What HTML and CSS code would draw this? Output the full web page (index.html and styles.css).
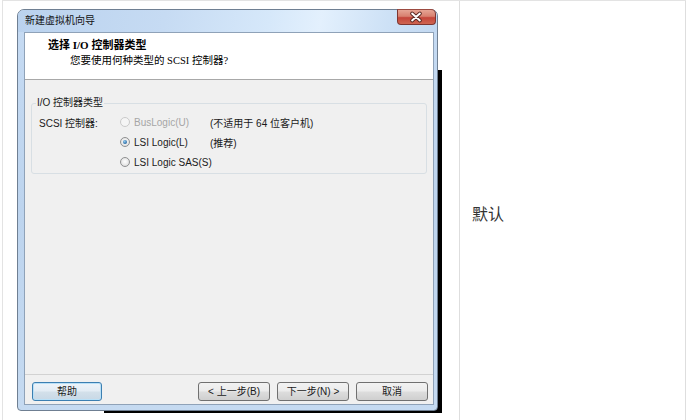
FILE: index.html
```html
<!DOCTYPE html>
<html lang="zh-CN">
<head>
<meta charset="utf-8">
<title>新建虚拟机向导</title>
<link rel="stylesheet" href="styles.css">
</head>
<body>
<div class="tbl">
  <div class="cell cell-img">
    <div class="win">
      <div class="titlebar">
        <span class="title">新建虚拟机向导</span>
        <span class="close">
          <svg width="39" height="16" viewBox="0 0 39 16">
            <path d="M15.5 4.5 L23.5 11.5 M23.5 4.5 L15.5 11.5" stroke="#5a2a24" stroke-width="4" stroke-linecap="round"/>
            <path d="M15.5 4.5 L23.5 11.5 M23.5 4.5 L15.5 11.5" stroke="#ffffff" stroke-width="2" stroke-linecap="round"/>
          </svg>
        </span>
      </div>
      <div class="client">
        <div class="header">
          <div class="h-title">选择 I/O 控制器类型</div>
          <div class="h-sub">您要使用何种类型的 SCSI 控制器?</div>
        </div>
        <div class="main">
          <fieldset class="group">
            <legend>I/O 控制器类型</legend>
            <div class="row">
              <span class="lbl">SCSI 控制器:</span>
              <span class="opt disabled"><span class="radio"></span>BusLogic(U)</span>
              <span class="desc">(不适用于 64 位客户机)</span>
            </div>
            <div class="row">
              <span class="lbl"></span>
              <span class="opt"><span class="radio on"></span>LSI Logic(L)</span>
              <span class="desc">(推荐)</span>
            </div>
            <div class="row">
              <span class="lbl"></span>
              <span class="opt wide"><span class="radio"></span>LSI Logic SAS(S)</span>
            </div>
          </fieldset>
        </div>
        <div class="footer">
          <button class="btn default">帮助</button>
          <span class="spacer"></span>
          <button class="btn">&lt; 上一步(B)</button>
          <button class="btn">下一步(N) &gt;</button>
          <button class="btn">取消</button>
        </div>
      </div>
    </div>
  </div>
  <div class="cell cell-text">默认</div>
</div>
</body>
</html>
```

FILE: styles.css
```css
body {
  margin: 0;
  background: #ffffff;
  font-family: "Liberation Sans", "Noto Sans CJK SC", sans-serif;
  color: #000;
}

.tbl {
  display: flex;
  margin-left: 2px;
  width: 684px;
  box-sizing: border-box;
  border-top: 1px solid #e3e3e3;
  border-left: 1px solid #e3e3e3;
}

.cell-img {
  width: 457px;
  box-sizing: border-box;
  border-right: 1px solid #dedede;
  padding: 8px 0 13px 14px;
}

.cell-text {
  flex: 1;
  border-right: 1px solid #dedede;
  display: flex;
  align-items: center;
  padding-left: 12px;
  font-size: 16px;
  color: #333;
}

/* dialog window */
.win {
  position: relative;
  width: 421px;
  height: 402px;
  box-sizing: border-box;
  border: 1px solid #6f7f92;
  border-radius: 7px 7px 4px 4px;
  background: linear-gradient(#c6dbf3, #bdd4ee 50%, #c5daf1);
  display: flex;
  flex-direction: column;
}

.win::before {
  content: "";
  position: absolute;
  right: -5px;
  top: 60px;
  width: 5px;
  bottom: -3px;
  background: #000;
  z-index: -1;
}

.win::after {
  content: "";
  position: absolute;
  left: 86px;
  right: -5px;
  bottom: -3px;
  height: 6px;
  background: #000;
  z-index: -1;
}

.titlebar {
  height: 22px;
  flex: none;
  display: flex;
  align-items: center;
  padding-left: 7px;
  font-size: 10px;
  border-radius: 6px 6px 0 0;
  background: linear-gradient(100deg, #bad2ee 0%, #c6dbf3 35%, #d6e8fa 60%, #e3f0fd 72%, #cde1f6 88%, #c2d8f1 100%);
}

.title {
  line-height: 14px;
  color: #111;
}

.close {
  position: absolute;
  top: -1px;
  right: 1px;
  width: 39px;
  height: 16px;
  box-sizing: border-box;
  border: 1px solid #7e3530;
  border-top-color: #9c4a40;
  border-radius: 0 5px 4px 4px;
  background: linear-gradient(#e6a595 0%, #d8806f 45%, #c4453a 55%, #cf6551 100%);
  display: flex;
  overflow: hidden;
}

.close svg {
  display: block;
  margin: -1px 0 0 -1px;
}

.client {
  width: 410px;
  height: 373px;
  margin: 0 0 5px 6px;
  box-sizing: border-box;
  border: 1px solid #8fa2b8;
  background: #f0f0f0;
  display: flex;
  flex-direction: column;
}

.header {
  height: 46px;
  flex: none;
  background: #fff;
  border-bottom: 1px solid #a8a8a8;
  padding-top: 5px;
  box-sizing: content-box;
  height: 41px;
}

.h-title {
  font-family: "Liberation Serif", "Noto Sans CJK SC", serif;
  font-weight: bold;
  font-size: 11px;
  line-height: 14px;
  padding-left: 23px;
}

.h-sub {
  font-family: "Liberation Serif", "Noto Sans CJK SC", serif;
  font-size: 10.5px;
  line-height: 14px;
  margin-top: 2px;
  padding-left: 45px;
}

.main {
  height: 294px;
  flex: none;
  box-sizing: border-box;
  padding-top: 16px;
}

.group {
  margin: 0 6px;
  padding: 2px 0 1px 4px;
  border: 1px solid #d8dfe4;
  border-radius: 3px;
  font-size: 10px;
}

.group legend {
  padding: 0 1px;
  line-height: 14px;
  font-size: 10px;
  color: #1a1a1a;
}

.row {
  display: flex;
  align-items: center;
  height: 20px;
  font-size: 10px;
  color: #1a1a1a;
}

.lbl {
  width: 81px;
  padding-left: 3px;
  flex: none;
}

.opt {
  width: 90px;
  flex: none;
  display: flex;
  align-items: center;
  gap: 4px;
}

.opt.wide {
  width: auto;
}

.opt.disabled {
  color: #a6a6a6;
}

.radio {
  width: 10px;
  height: 10px;
  flex: none;
  box-sizing: border-box;
  border-radius: 50%;
  border: 1px solid #8f9091;
  background: radial-gradient(circle at 50% 45%, #ffffff 0%, #e6e6e6 60%, #cfcfcf 100%);
  position: relative;
}

.radio.on::after {
  content: "";
  position: absolute;
  left: 2px;
  top: 2px;
  width: 4px;
  height: 4px;
  border-radius: 50%;
  background: radial-gradient(circle at 40% 35%, #8fcaf0 0%, #2a6aa3 70%, #1b4f80 100%);
}

.disabled .radio {
  border-color: #cacaca;
  background: #f5f5f5;
}

.footer {
  flex: 1;
  border-top: 1px solid #d2d2d2;
  display: flex;
  align-items: flex-start;
  gap: 7px;
  padding: 7px 5px 0 7px;
}

.spacer {
  flex: 1;
}

.btn {
  width: 72px;
  height: 19px;
  margin: 0;
  padding: 0;
  box-sizing: border-box;
  border: 1px solid #707070;
  border-radius: 3px;
  background: linear-gradient(#f2f2f2 0%, #ebebeb 48%, #dddddd 52%, #cfcfcf 100%);
  font-family: "Liberation Sans", "Noto Sans CJK SC", sans-serif;
  font-size: 10px;
  line-height: 17px;
  color: #1a1a1a;
  text-align: center;
}

.btn.default {
  width: 70px;
  border-color: #3c7fb1;
  box-shadow: inset 0 0 0 1px #b9e0f7;
  background: linear-gradient(#eef4f9 0%, #e3ecf4 48%, #d3e0ea 52%, #c8d8e6 100%);
}
```
